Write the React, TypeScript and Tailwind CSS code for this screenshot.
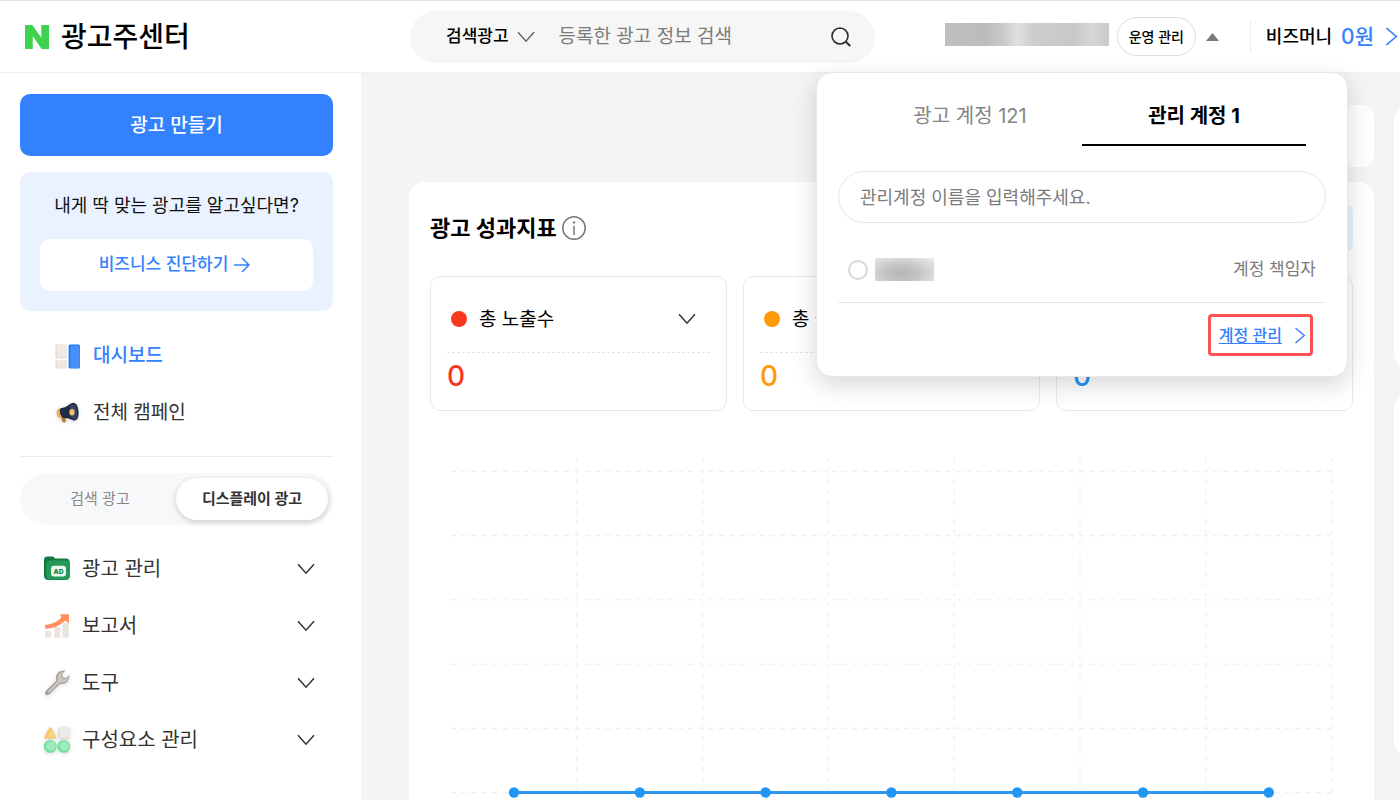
import { useState } from "react";
import type { ReactNode } from "react";
import { SiNaver } from "react-icons/si";

type IconProps = { className?: string };

function ChevronDown({ className }: IconProps) {
  return (
    <svg viewBox="0 0 18 12" className={className} fill="none" stroke="currentColor" strokeWidth="1.5" aria-hidden="true">
      <path d="M1 1.2 9 10.2 17 1.2" />
    </svg>
  );
}

function ChevronRight({ className }: IconProps) {
  return (
    <svg viewBox="0 0 12 18" className={className} fill="none" stroke="currentColor" strokeWidth="1.5" aria-hidden="true">
      <path d="M1.2 1 10.6 9 1.2 17" />
    </svg>
  );
}

function DashboardIcon() {
  return (
    <svg viewBox="0 0 28 28" className="size-7" aria-hidden="true">
      <rect x="2.4" y="1.6" width="11.6" height="14" rx="1.5" fill="#e2dbd6" />
      <rect x="4" y="1.6" width="10" height="12.8" rx="1" fill="#efeae6" />
      <rect x="2.4" y="17.2" width="11.6" height="8.4" rx="1.5" fill="#e2dbd6" />
      <rect x="4" y="17.2" width="10" height="7.2" rx="1" fill="#efeae6" />
      <rect x="15.6" y="1.6" width="11.4" height="24" rx="1.5" fill="#1a7cf5" />
      <rect x="17.4" y="2.8" width="9.2" height="22.2" rx="1" fill="#4b8ff8" />
    </svg>
  );
}

function MegaphoneIcon() {
  return (
    <svg viewBox="0 0 28 28" className="size-7 drop-shadow-sm" aria-hidden="true">
      <path d="M7 14.5 12.6 16.5 12.8 21.4 Q11 23.6 9.2 21.2Z" fill="#b9791f" />
      <path d="M4.2 9.8 Q2.8 12.4 4.6 16.6 Q6.2 18.6 9.4 18 L9 8 Q6 8 4.2 9.8Z" fill="#eeb055" />
      <path d="M7.2 8.6 Q13.6 7.2 18.2 3.2 Q21.2 2 23.6 4.6 Q26.6 10 25.2 16.8 Q23.6 21.4 20.6 20.4 Q14.8 17.4 9.2 17.8 Q5.8 13 7.2 8.6Z" fill="#202b44" />
      <path d="M17 5.2 Q20.4 3 22.8 6.8 Q25 12.2 23.4 17.4 Q21.6 20.4 19 19 Q16 12.2 17 5.2Z" fill="#37435f" />
      <ellipse cx="19" cy="12.2" rx="2.6" ry="3.3" fill="#f1bd72" />
    </svg>
  );
}

function AdFolderIcon() {
  return (
    <svg viewBox="0 0 28 28" className="size-7" aria-hidden="true">
      <path d="M1 5 Q1 1.6 4.5 1.6 H9.5 Q11 1.6 12 3.4 H23 Q26.6 3.4 26.8 7.4 V20.6 Q26.8 25 22 25 H5.5 Q1 25 1 20.6Z" fill="#157a40" />
      <path d="M3.4 9.4 Q3.4 5.4 7.4 5.4 H22.8 Q27 5.4 27 9.4 V20.4 Q27 24.6 22.8 24.6 H7.6 Q3.4 24.6 3.4 20.4Z" fill="#259a58" />
      <rect x="8" y="10.8" width="15" height="10.6" rx="3" fill="#e9f7ee" />
      <text x="15.5" y="18.6" fontSize="6.6" fontWeight="900" fontFamily="Inter, sans-serif" textAnchor="middle" fill="#1f8a4d">
        AD
      </text>
    </svg>
  );
}

function ReportIcon() {
  return (
    <svg viewBox="0 0 28 28" className="size-7" aria-hidden="true">
      <rect x="2" y="18.8" width="6.4" height="7" rx="0.8" fill="#ebe5e0" />
      <rect x="11" y="15" width="6.4" height="10.8" rx="0.8" fill="#ebe5e0" />
      <rect x="19.4" y="10.5" width="6.4" height="15.3" rx="0.8" fill="#ebe5e0" />
      <path d="M2 13 Q11 12.8 18.4 5.6 L17.2 2.2 H26 V11 L22 8.8 Q13 17.2 2 16.6Z" fill="#ff8f63" />
    </svg>
  );
}

function WrenchIcon() {
  return (
    <svg viewBox="0 0 28 28" className="size-7 drop-shadow-sm" aria-hidden="true">
      <path
        d="M2.6 22.2 13.4 11.4 Q12.2 6 15.8 3 Q18.4 .8 22.4 1.6 L19 5.2 19.8 8.6 22.6 9.2 26.2 6 Q27 9.6 24.4 12.4 Q21.2 15.4 17 14.8 L6.4 25.2 Q4.6 26.6 2.8 25.4 Q1.4 24 2.6 22.2Z"
        fill="#a09a92"
      />
      <path d="M4.2 22.6 14.8 11.8 Q13.6 6.8 17 3.8 Q18.6 2.4 21.2 2.2 L18 5.2 19 9.4 22.8 10.2 26.2 7 Q26.2 9.8 23.8 11.8 Q20.8 14.4 16.8 13.4 L6 24.2Z" fill="#cbc6bf" />
    </svg>
  );
}

function ComponentsIcon() {
  return (
    <svg viewBox="0 0 28 28" className="size-7 drop-shadow-sm" aria-hidden="true">
      <path d="M6.2 2 Q7.4 .4 8.6 2 L13 11 Q13.4 12.4 12 12.6 H2.2 Q.8 12.4 1.4 11Z" fill="#f6c460" />
      <path d="M8 2.6 12.2 11.2 H4Z" fill="#fbd684" />
      <rect x="15.4" y="1.6" width="11.4" height="11.2" rx="1" fill="#e2dbd6" />
      <rect x="16.8" y="1.6" width="10" height="10" rx="1" fill="#efeae6" />
      <circle cx="7.2" cy="20.4" r="6.4" fill="#6fdfa0" />
      <circle cx="7.8" cy="20" r="4.8" fill="#9bebbd" />
      <circle cx="20.8" cy="20.4" r="6.4" fill="#6fdfa0" />
      <circle cx="21.4" cy="20" r="4.8" fill="#9bebbd" />
    </svg>
  );
}

function AccountMenu() {
  const [tab, setTab] = useState("manage");

  const tabs = [
    { id: "ad", label: "광고 계정 121" },
    { id: "manage", label: "관리 계정 1" },
  ];

  return (
    <div className="absolute top-[71px] right-[52px] z-10 w-[532px] rounded-2xl border border-[#e8e8e8] bg-white px-[21px] pt-4 pb-5 shadow-[0_8px_24px_rgba(0,0,0,0.16)]">
      <div className="flex px-5" role="tablist">
        {tabs.map((t) => (
          <button
            key={t.id}
            type="button"
            role="tab"
            aria-selected={tab === t.id}
            onClick={() => setTab(t.id)}
            className={
              tab === t.id
                ? "h-[57px] flex-1 border-b-2 border-black pb-[2px] text-[20px] font-bold text-black"
                : "h-[57px] flex-1 border-b-2 border-transparent pb-[2px] text-[20px] text-[#858585]"
            }
          >
            {t.label}
          </button>
        ))}
      </div>
      <input
        type="text"
        aria-label="관리계정 이름"
        placeholder="관리계정 이름을 입력해주세요."
        className="mt-[25px] h-[52px] w-full rounded-full border border-[#e6e6ee] px-[21px] text-lg text-[#222] outline-none placeholder:text-[#7b7b7b]"
      />
      <div className="mt-[14px] flex h-[66px] items-center border-b border-[#e9e9ec] px-[10px]">
        <label className="flex items-center gap-[7px]">
          <input type="radio" name="account" aria-label="관리 계정" className="size-5 appearance-none rounded-full border-2 border-[#d8d8d8] bg-white" />
          <span className="h-[23px] w-[59px] bg-[radial-gradient(ellipse_at_45%_65%,#b7b7b7,#c2c2c2_35%,#d6d6d6_65%,#eeeeee)]" />
        </label>
        <span className="ml-auto text-[17px] text-[#7b7b7b]">계정 책임자</span>
      </div>
      <div className="mt-[11px] mr-[13px] flex justify-end">
        <a href="#accounts" className="flex h-[42px] items-center gap-3 rounded border-[3px] border-[#fb5355] pr-1 pl-2 text-base font-medium text-[#3381ff]">
          <span className="underline underline-offset-2">계정 관리</span>
          <ChevronRight className="h-[17px] w-3" />
        </a>
      </div>
    </div>
  );
}

function Header() {
  return (
    <header className="relative flex h-[73px] shrink-0 items-center border-t border-b border-t-[#e0e0e0] border-b-[#efefef] bg-white pl-[25px]">
      <h1 className="w-[385px] shrink-0">
        <a href="#home" className="flex items-center gap-3 text-[28px] font-medium text-black">
          <SiNaver className="size-6 text-[#3dd34e]" aria-label="NAVER" />
          광고주센터
        </a>
      </h1>
      <form className="flex h-[52px] w-[465px] shrink-0 items-center rounded-full bg-[#f6f6f6] pr-[22px] pl-9">
        <button type="button" className="flex items-center gap-2 text-[17px] font-medium text-black">
          검색광고
          <ChevronDown className="h-3 w-[18px] text-[#666]" />
        </button>
        <input
          type="search"
          aria-label="광고 정보 검색"
          placeholder="등록한 광고 정보 검색"
          className="ml-6 min-w-0 flex-1 bg-transparent pt-[2px] text-[19px] text-[#222] outline-none placeholder:text-[#7b7b7b]"
        />
        <button type="submit" aria-label="검색">
          <svg viewBox="0 0 24 24" className="size-6" fill="none" stroke="#2b2b2b" strokeWidth="1.6" aria-hidden="true">
            <circle cx="11" cy="11" r="8" />
            <path d="m16.8 16.8 4.4 4.2" strokeWidth="2" />
          </svg>
        </button>
      </form>
      <div className="ml-auto flex shrink-0 items-center pr-[2px]">
        <span className="mr-2 mb-1 h-[23px] w-[164px] bg-[linear-gradient(90deg,#bfbfbf,#bcbcbc_25%,#cacaca_36%,#e0e0e0_44%,#cdcdcd_54%,#c8c8c8_78%,#d6d6d6_90%,#cacaca)]" />
        <button type="button" className="h-[39px] w-[79px] rounded-full border border-[#dcdcdc] text-sm font-medium text-black">
          운영 관리
        </button>
        <button type="button" aria-label="계정 목록 닫기" className="ml-[9px] p-px">
          <svg viewBox="0 0 13 8" className="h-2 w-[13px]" aria-hidden="true">
            <path d="M6.5 0 13 8H0Z" fill="#77787b" />
          </svg>
        </button>
        <a href="#bizmoney" className="ml-[30px] flex h-8 items-center border-l border-[#ebebeb] pl-[15px]">
          <span className="text-[18px] font-medium text-black">비즈머니</span>
          <span className="ml-[9px] text-[21px] font-medium text-[#3381ff]">0원</span>
          <ChevronRight className="ml-[11px] h-[19px] w-[13px] text-[#3381ff]" />
        </a>
      </div>
      <AccountMenu />
    </header>
  );
}

const MENU: { label: string; icon: ReactNode }[] = [
  { label: "광고 관리", icon: <AdFolderIcon /> },
  { label: "보고서", icon: <ReportIcon /> },
  { label: "도구", icon: <WrenchIcon /> },
  { label: "구성요소 관리", icon: <ComponentsIcon /> },
];

function Sidebar() {
  return (
    <aside className="w-[361px] shrink-0 bg-white pt-[21px] pr-7 pl-5">
      <button type="button" className="h-[62px] w-full rounded-[10px] bg-[#3381ff] pt-[2px] text-[19px] font-medium text-white">
        광고 만들기
      </button>
      <div className="mt-4 rounded-[10px] bg-[#eaf2ff] px-5 pt-5 pb-5 text-center">
        <p className="h-[47px] text-[18px] leading-7 text-[#111]">내게 딱 맞는 광고를 알고싶다면?</p>
        <button type="button" className="flex h-[52px] w-full items-center justify-center gap-[6px] rounded-[10px] bg-white pr-1 text-[17px] font-medium text-[#3381ff]">
          비즈니스 진단하기
          <svg viewBox="0 0 16 16" className="size-4" fill="none" stroke="currentColor" strokeWidth="1.5" aria-hidden="true">
            <path d="M0 8h15M8 1l7 7-7 7" />
          </svg>
        </button>
      </div>

      <nav className="mt-4 border-b border-[#ebebeb] pb-[15px] text-[19px]">
        <a href="#dashboard" className="flex h-[57px] items-center gap-3 pt-[2px] pl-[33px] font-medium text-[#3381ff]">
          <DashboardIcon />
          대시보드
        </a>
        <a href="#campaigns" className="flex h-[57px] items-center gap-3 pt-[2px] pl-[33px] text-[#333]">
          <MegaphoneIcon />
          전체 캠페인
        </a>
      </nav>

      <div className="mt-4 flex h-[52px] items-center rounded-full bg-[#f7f8fa] pr-[5px] text-[15px]">
        <button type="button" className="h-[42px] flex-1 pl-1 text-[#888]">
          검색 광고
        </button>
        <button type="button" className="h-[42px] w-[152px] rounded-full bg-white font-bold text-[#333] shadow-[0_2px_6px_rgba(0,0,0,0.18)]">
          디스플레이 광고
        </button>
      </div>

      <nav className="mt-[15px]">
        {MENU.map((item) => (
          <button key={item.label} type="button" className="flex h-[57px] w-full items-center pr-[18px] pl-[23px] text-[20px] text-[#333]">
            {item.icon}
            <span className="ml-[11px]">{item.label}</span>
            <ChevronDown className="ml-auto h-3 w-[18px]" />
          </button>
        ))}
      </nav>
    </aside>
  );
}

const STATS = [
  { label: "총 노출수", value: 0, dot: "bg-[#f8381f]", text: "text-[#f8381f]" },
  { label: "총 클릭수", value: 0, dot: "bg-[#ff9a09]", text: "text-[#ff9a09]" },
  { label: "총 비용", value: 0, dot: "bg-[#2196f3]", text: "text-[#2196f3]" },
];

const COLUMNS = [1, 2, 3, 4, 5, 6, 7];
const ROWS = [0, 1, 2, 3, 4, 5];
const COLUMN_WIDTH = 125.8;
const ROW_HEIGHT = 64.2;

function PerformanceChart() {
  return (
    <svg viewBox="0 0 923 480" className="mt-9 w-full" role="img" aria-label="광고 성과지표 그래프">
      <g stroke="#efefef" strokeWidth="1.2" strokeDasharray="5 5.3">
        {ROWS.map((row) => (
          <line key={row} x1="21" x2="901" y1={24.5 + row * ROW_HEIGHT} y2={24.5 + row * ROW_HEIGHT} />
        ))}
        {COLUMNS.map((col) => (
          <line key={col} x1={21 + col * COLUMN_WIDTH} x2={21 + col * COLUMN_WIDTH} y1="11" y2="345.5" />
        ))}
      </g>
      <line x1="84" x2="838.8" y1="345.5" y2="345.5" stroke="#2e97f2" strokeWidth="3" />
      {COLUMNS.map((col) => (
        <circle key={col} cx={84 + (col - 1) * COLUMN_WIDTH} cy="345.5" r="5.2" fill="#2196f3" />
      ))}
    </svg>
  );
}

function Performance() {
  return (
    <section className="min-h-[800px] rounded-2xl bg-white px-[21px] pt-[22px]">
      <div className="flex h-12 items-center">
        <h2 className="text-[22px] font-bold text-black">광고 성과지표</h2>
        <button type="button" aria-label="광고 성과지표 안내" className="ml-[5px]">
          <svg viewBox="0 0 24 24" className="size-6" fill="none" stroke="#777" strokeWidth="1.5" aria-hidden="true">
            <circle cx="12" cy="12" r="11.2" />
            <path d="M12 9.8V19" />
            <circle cx="12" cy="6.4" r="1.2" fill="#777" stroke="none" />
          </svg>
        </button>
        <button type="button" aria-label="새로고침" className="ml-auto h-12 w-32 rounded-lg bg-[#e8f1ff]" />
      </div>
      <div className="mt-6 grid grid-cols-3 gap-4">
        {STATS.map((stat) => (
          <div key={stat.label} className="h-[135px] rounded-[10px] border border-[#e8e8e8] px-4">
            <button type="button" className="flex h-[76px] w-full items-center border-b border-dashed border-[#e4e4e4] px-1 pt-[9px] text-[19px] text-black">
              <span className={`mr-3 size-4 rounded-full ${stat.dot}`} />
              <span className="pt-[2px]">{stat.label}</span>
              <ChevronDown className="mr-[10px] ml-auto h-3 w-[18px] text-[#333]" />
            </button>
            <p className={`text-[28px] leading-[46px] font-medium ${stat.text}`}>{stat.value}</p>
          </div>
        ))}
      </div>
      <PerformanceChart />
    </section>
  );
}

export default function App() {
  return (
    <div className="flex h-screen flex-col overflow-hidden bg-[#f4f4f4] font-[Inter,'Noto_Sans_CJK_KR',sans-serif]">
      <Header />
      <div className="flex min-h-0 flex-1">
        <Sidebar />
        <main className="min-w-0 flex-1 overflow-hidden pt-8 pl-12">
          {/* side column runs past the right edge of the window */}
          <div className="-mr-[314px] flex gap-5">
            <div className="min-w-0 flex-1">
              <div className="mb-[15px] ml-auto h-[62px] w-1/2 rounded-xl bg-white" />
              <Performance />
            </div>
            <div className="flex w-80 shrink-0 flex-col gap-6">
              <div className="h-[264px] rounded-2xl bg-white" />
              <div className="h-[364px] rounded-2xl bg-white" />
            </div>
          </div>
        </main>
      </div>
    </div>
  );
}
